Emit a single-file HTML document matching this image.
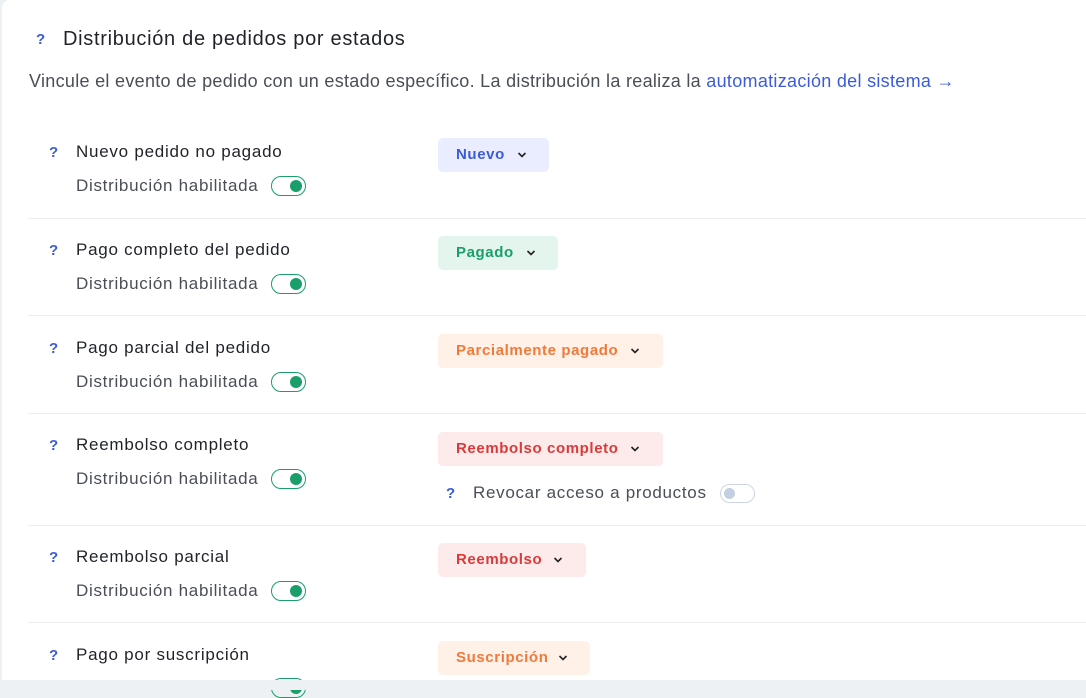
<html><head><style>
body{margin:0;width:1086px;height:690px;background:#eef1f3;font-family:"Liberation Sans",sans-serif;overflow:hidden;position:relative}
.card{position:absolute;left:2px;top:0;width:1100px;height:680px;background:#fff;border-radius:8px 0 0 0}
.a{position:absolute;white-space:nowrap}
.q{color:#3b5bdb;font-weight:bold;font-size:15px}
.t{font-size:17px;color:#1f2329;letter-spacing:0.75px}
.s{font-size:17px;color:#4a4f57;letter-spacing:0.7px}
.sep{position:absolute;left:28px;right:0;height:1px;background:#ebedf0}
.tg{position:absolute;width:35px;height:20px;border:1.5px solid #1a9e6a;border-radius:11px;box-sizing:border-box}
.tg:after{content:"";position:absolute;right:3px;top:2.5px;width:12px;height:12px;border-radius:50%;background:#1a9e6a}
.p{position:absolute;height:34px;border-radius:5px;font-weight:bold;font-size:15px;line-height:34px;padding-left:18px;box-sizing:border-box;letter-spacing:0.6px}
.p svg{position:absolute;top:13px}
</style></head><body><div class="card"></div>
<div class="a q" style="left:36px;top:31px">?</div>
<div class="a" style="left:63px;top:28px;font-size:20px;letter-spacing:0.7px;color:#1f2329">Distribución de pedidos por estados</div>
<div class="a s" style="left:29px;top:71px;font-size:18px;letter-spacing:0.3px">Vincule el evento de pedido con un estado específico. La distribución la realiza la <span style="color:#3b5bdb">automatización del sistema →</span></div>

<div class="a q" style="left:49px;top:144px">?</div><div class="a t" style="left:76px;top:142px">Nuevo pedido no pagado</div>
<div class="a s" style="left:76px;top:176px">Distribución habilitada</div><div class="tg" style="left:271px;top:176px"></div>
<div class="p" style="left:438px;top:138px;width:111px;background:#e9edff;color:#3b5bdb">Nuevo<svg style="left:79px" width="10" height="8"><path d="M1.5 2l3.5 3.5 3.5-3.5" stroke="#222" stroke-width="1.6" fill="none"/></svg></div>
<div class="sep" style="top:218px"></div>

<div class="a q" style="left:49px;top:242px">?</div><div class="a t" style="left:76px;top:240px">Pago completo del pedido</div>
<div class="a s" style="left:76px;top:274px">Distribución habilitada</div><div class="tg" style="left:271px;top:274px"></div>
<div class="p" style="left:438px;top:236px;width:120px;background:#e3f5ec;color:#1a9e6a">Pagado<svg style="left:88px" width="10" height="8"><path d="M1.5 2l3.5 3.5 3.5-3.5" stroke="#222" stroke-width="1.6" fill="none"/></svg></div>
<div class="sep" style="top:315px"></div>

<div class="a q" style="left:49px;top:340px">?</div><div class="a t" style="left:76px;top:338px">Pago parcial del pedido</div>
<div class="a s" style="left:76px;top:372px">Distribución habilitada</div><div class="tg" style="left:271px;top:372px"></div>
<div class="p" style="left:438px;top:334px;width:225px;background:#fff0e8;color:#f07a3a">Parcialmente pagado<svg style="left:192px" width="10" height="8"><path d="M1.5 2l3.5 3.5 3.5-3.5" stroke="#222" stroke-width="1.6" fill="none"/></svg></div>
<div class="sep" style="top:413px"></div>

<div class="a q" style="left:49px;top:437px">?</div><div class="a t" style="left:76px;top:435px">Reembolso completo</div>
<div class="a s" style="left:76px;top:469px">Distribución habilitada</div><div class="tg" style="left:271px;top:469px"></div>
<div class="p" style="left:438px;top:432px;width:225px;background:#fdeaea;color:#d93a3a">Reembolso completo<svg style="left:192px" width="10" height="8"><path d="M1.5 2l3.5 3.5 3.5-3.5" stroke="#222" stroke-width="1.6" fill="none"/></svg></div>
<div class="a q" style="left:446px;top:485px">?</div><div class="a s" style="left:473px;top:483px">Revocar acceso a productos</div>
<div style="position:absolute;left:720px;top:484px;width:35px;height:19px;border:1px solid #cdd5e3;border-radius:10px;box-sizing:border-box"><div style="position:absolute;left:3px;top:3px;width:11px;height:11px;border-radius:50%;background:#c3cfe0"></div></div>
<div class="sep" style="top:525px"></div>

<div class="a q" style="left:49px;top:549px">?</div><div class="a t" style="left:76px;top:547px">Reembolso parcial</div>
<div class="a s" style="left:76px;top:581px">Distribución habilitada</div><div class="tg" style="left:271px;top:581px"></div>
<div class="p" style="left:438px;top:543px;width:148px;background:#fdeaea;color:#d93a3a">Reembolso<svg style="left:115px" width="10" height="8"><path d="M1.5 2l3.5 3.5 3.5-3.5" stroke="#222" stroke-width="1.6" fill="none"/></svg></div>
<div class="sep" style="top:622px"></div>

<div class="a q" style="left:49px;top:647px">?</div><div class="a t" style="left:76px;top:645px">Pago por suscripción</div>
<div class="tg" style="left:271px;top:678px"></div>
<div class="p" style="left:438px;top:641px;width:152px;background:#fff0e8;color:#f07a3a">Suscripción<svg style="left:120px" width="10" height="8"><path d="M1.5 2l3.5 3.5 3.5-3.5" stroke="#222" stroke-width="1.6" fill="none"/></svg></div>
<div style="position:absolute;left:0;top:680px;width:1086px;height:10px;background:#eef1f3"></div>
</body></html>
